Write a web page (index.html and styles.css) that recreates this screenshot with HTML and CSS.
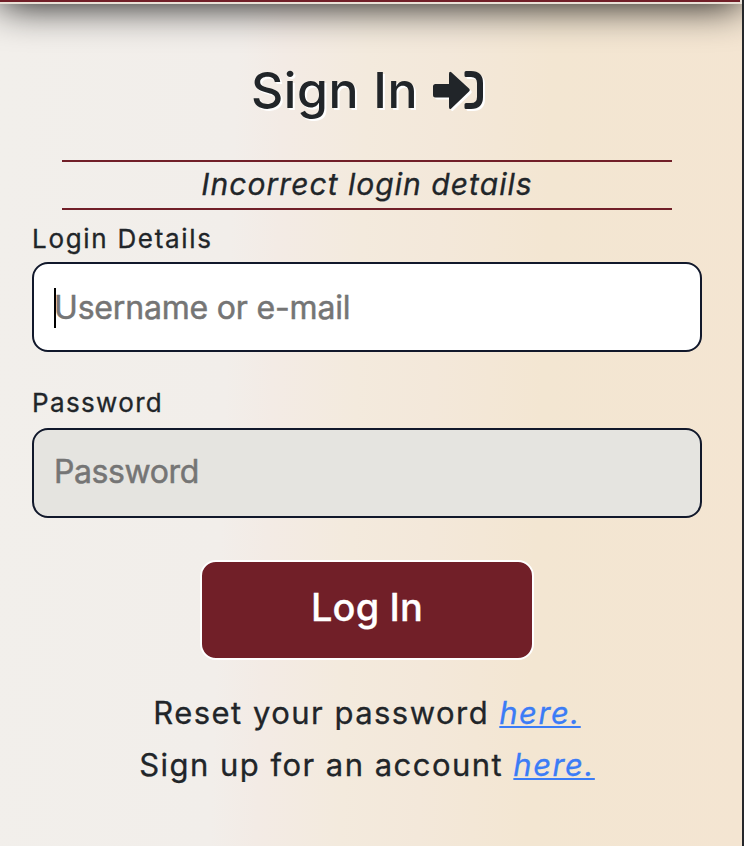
FILE: index.html
```html
<!DOCTYPE html>
<html lang="en">
<head>
<meta charset="utf-8">
<title>Sign In</title>
<link rel="stylesheet" href="styles.css">
</head>
<body>
<div class="page">
  <header class="site-header"></header>
  <main class="content">
    <h1 class="title"><span>Sign In</span>
      <svg class="title-icon" viewBox="0 0 50 38" aria-hidden="true"><path d="M0 15.5Q0 13 2.500 13H16V3Q16 0 18.300 1.200L36 17.500Q37.500 19 36 20.500L18.300 37.500Q16 39 16 36V26.500H2.500Q0 26.500 0 24Z"/><path d="M33 0H38Q50 0 50 12V26Q50 38 38 38H33Q31.500 38 31.500 36.500V33.500Q31.500 32 33 32H38Q44 32 44 26V12Q44 6 38 6H33Q31.500 6 31.500 4.500V1.500Q31.500 0 33 0Z"/></svg>
    </h1>
    <p class="alert"><span>Incorrect login details</span></p>
    <form class="form">
      <label class="label label-login" for="login">Login Details</label>
      <div class="field field-active"><span class="caret"></span><input class="input input-login" id="login" type="text" placeholder="Username or e-mail"></div>
      <label class="label label-password" for="password">Password</label>
      <div class="field"><input class="input input-password" id="password" type="password" placeholder="Password"></div>
      <button class="submit" type="button">Log In</button>
    </form>
    <p class="link-row reset">Reset your password <a href="#">here.</a></p>
    <p class="link-row signup">Sign up for an account <a href="#">here.</a></p>
  </main>
</div>
</body>
</html>
```
FILE: styles.css
```css
* { box-sizing: border-box; }
body {
  margin: 0;
  font-family: Inter, "Liberation Sans", sans-serif;
  color: #212529;
  -webkit-text-stroke: .3px;
}
.page {
  height: 846px;
  overflow: hidden;
  border-right: 2px solid #25272b;
  background: linear-gradient(92deg, #f2efeb 0%, #f2eeea 31%, #f3ebe5 37%, #f3eadd 48%, #f3e8da 58%, #f3e6d2 72%, #f4e5d2 100%);
}
.site-header {
  height: 104px;
  margin-top: -100px;
  background: #711f28;
  border: solid #e9e1d7;
  border-width: 0 2px 2px 0;
  box-shadow: 0 0 40px #000;
}
.content {
  display: flex;
  flex-direction: column;
  padding: 0 40px 0 32px;
}
.title {
  display: flex;
  justify-content: center;
  align-items: center;
  gap: 15px;
  height: 60px;
  margin: 56px 0 40px;
  font-size: 50px;
  font-weight: 500;
  letter-spacing: .6px;
  text-shadow: 2px 2px 0 #fff;
  -webkit-text-stroke: 0;
}
.title-icon {
  width: 50px;
  height: 38px;
  fill: #212529;
  overflow: visible;
  filter: drop-shadow(2px 2px 0 #fff);
}
.alert {
  height: 50px;
  margin: 0 30px;
  border: solid #711f28;
  border-width: 2px 0;
  font-size: 30px;
  font-style: italic;
  line-height: 45px;
  letter-spacing: 1.04px;
  text-align: center;
}
.form {
  display: flex;
  flex-direction: column;
}
.label {
  height: 52px;
  padding-top: 13px;
  font-size: 26px;
  line-height: 32px;
  letter-spacing: 1.7px;
}
.label-password { height: 76px; padding-top: 35px; letter-spacing: 1.35px; }
.field {
  display: flex;
  align-items: center;
  height: 90px;
  padding: 0 20px 4px;
  border: 2px solid #11182b;
  border-radius: 16px;
  background: #e5e4e0;
}
.field-active { background: #fff; padding-bottom: 0; }
.caret {
  width: 2px;
  height: 40px;
  margin: 2px -2px 0 0;
  background: #000;
}
.input {
  flex: 1;
  min-width: 0;
  padding: 0;
  border: 0;
  outline: 0;
  background: transparent;
  font: 400 32px Inter, "Liberation Sans", sans-serif;
  letter-spacing: -.18px;
  -webkit-text-stroke: .5px;
}
.input-password { letter-spacing: -.4px; }
.input::placeholder { color: #757575; opacity: 1; }
.submit {
  align-self: center;
  width: 334px;
  height: 100px;
  margin-top: 42px;
  padding: 0 0 6px;
  border: 2px solid #fff;
  border-radius: 16px;
  background: #711f28;
  color: #fff;
  font: 500 38px Inter, "Liberation Sans", sans-serif;
  letter-spacing: .1px;
}
.link-row {
  margin: 0;
  font-size: 31px;
  line-height: 52px;
  letter-spacing: 1.47px;
  text-align: center;
  white-space: nowrap;
}
.reset { margin-top: 27px; }
.link-row a {
  color: #3b7cf6;
  font-style: italic;
  text-decoration-thickness: 2px;
  text-underline-offset: 2px;
  text-decoration-skip-ink: none;
}
```
